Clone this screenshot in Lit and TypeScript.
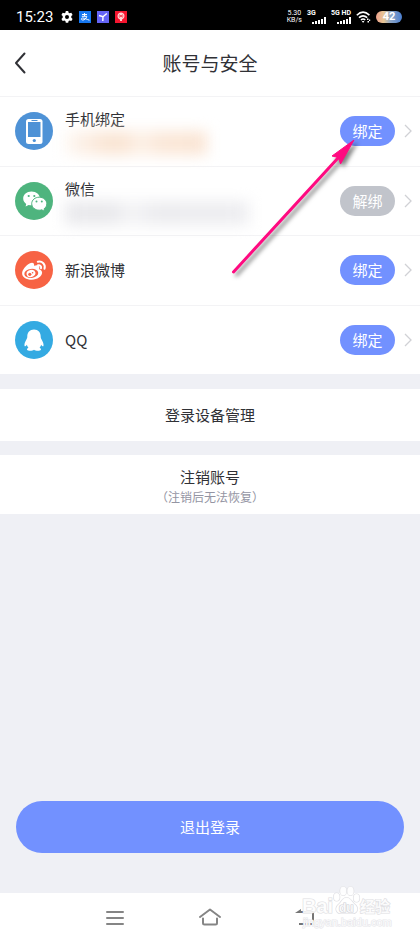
import { LitElement, html, css, svg, nothing } from "lit";
import { customElement, property } from "lit/decorators.js";
import { classMap } from "lit/directives/class-map.js";

const fontStack = css`"Noto Sans CJK SC", "Noto Sans", sans-serif`;

const bars = html`<svg class="bars" viewBox="0 0 14 7" aria-hidden="true">
  <path fill="#fff" d="M0 5h2v2H0zM3 4h2v3H3zM6 3h2v4H6zM9 2h2v5H9zM12 0h2v7h-2z" />
</svg>`;

@customElement("status-bar")
export class StatusBar extends LitElement {
  static styles = css`
    :host {
      display: flex;
      align-items: center;
      height: 30px;
      padding: 4px 18px 0 16px;
      box-sizing: border-box;
      background: #000;
      color: #fff;
      font-family: Roboto, sans-serif;
    }
    .time { font-size: 15px; line-height: 18px; margin-right: 8px; }
    .apps { display: flex; gap: 6px; }
    .apps svg { width: 12px; height: 12px; display: block; }
    .signals { display: flex; align-items: center; gap: 5px; margin-left: auto; }
    .speed { font-size: 7px; line-height: 7px; text-align: center; }
    .net { display: flex; flex-direction: column; align-items: flex-end; font-size: 7px; line-height: 7px; font-weight: 700; }
    .net span { align-self: flex-start; }
    .bars { width: 14px; height: 7px; display: block; }
    .net .bars { margin-left: 5px; }
    .wifi { width: 15px; height: 12px; display: block; }
    .battery {
      width: 26px;
      height: 12px;
      border-radius: 6px;
      background: linear-gradient(90deg, #eda08c, #e6c795 30%, #8fa6c4 55%, #4b7fd0);
      font-size: 11px;
      line-height: 12px;
      font-weight: 700;
      text-align: center;
    }
  `;
  render() {
    return html`
      <span class="time">15:23</span>
      <span class="apps">
        <svg viewBox="0 0 12 12">
          <path fill="#fff" fill-rule="evenodd" d="M4.8 0h2.4l.4 1.7 1 .6 1.7-.6 1.3 2.2-1.3 1.2v1.6l1.3 1.2-1.3 2.2-1.7-.6-1 .6-.4 1.7H4.8l-.4-1.7-1-.6-1.7.6L.4 7.9l1.3-1.2V5.1L.4 3.9l1.3-2.2 1.7.6 1-.6zM6 4a2 2 0 1 0 0 4 2 2 0 0 0 0-4z" />
        </svg>
        <svg viewBox="0 0 12 12">
          <path fill="#1677f0" d="M0 0h12v12H0z" />
          <path fill="none" stroke="#fff" d="M3 3.5h5M5.5 2v3M2.8 5.3h5C7 8 5.5 9 3.8 9 1.5 9 2 6.8 4 7c2 .2 4 1.6 6.5 2.200" />
        </svg>
        <svg viewBox="0 0 12 12">
          <path fill="#6464f5" d="M0 0h12v12H0z" />
          <path fill="none" stroke="#fff" stroke-width="1.400" d="M2 4.500l4 1.200L9.800 2.500M6 5.700 5.800 10" />
        </svg>
        <svg viewBox="0 0 12 12">
          <path fill="#f5152f" d="M0 0h12v12H0z" />
          <path fill="#ffd5d5" d="M6 1.500c2 0 3.500 1.500 3.500 3.500S8 8 7 8.500V10H5V8.500C3.500 8 2.500 7 2.500 5S4 1.500 6 1.500z" />
          <path fill="none" stroke="#f5152f" stroke-width=".6" d="M3.500 5h5M4 3.500l4 3M8 3.500l-4 3" />
        </svg>
      </span>
      <span class="signals">
        <span class="speed">5.30<br />KB/s</span>
        <span class="net"><span>3G</span>${bars}</span>
        <span class="net"><span>5G HD</span>${bars}</span>
        <svg class="wifi" viewBox="0 0 15 12">
          <g fill="none" stroke="#fff" stroke-width="1.600">
            <path d="M.8 4.200Q7 -1.800 13.400 4.200M3 6.700q4-3.800 8.200 0M5 9q2.100-2 4.200 0" />
          </g>
          <path fill="#fff" d="M5.800 10h2.600L7.100 12zM11 7.500h1.500V9H11zM13 8.500h1.200V10H13zM11.500 10H13v1.500h-1.500z" />
        </svg>
        <span class="battery">42</span>
      </span>
    `;
  }
}

const logos: Record<string, unknown> = {
  phone: svg`
    <circle cx="19" cy="19" r="19" fill="#4e92d6"/>
    <rect x="11" y="7" width="16.500" height="25" rx="2.500" fill="#fff"/>
    <rect x="13" y="10" width="12.500" height="15" fill="#4e92d6"/>
    <path d="M16.500 8.500h6" stroke="#4e92d6" stroke-width="1"/>
    <circle cx="19.300" cy="28.500" r="1.600" fill="#4e92d6"/>`,
  wechat: svg`
    <circle cx="19" cy="19" r="19" fill="#4eb47e"/>
    <path fill="#fff" d="M16.500 9.500c-4.800 0-8.300 3.100-8.300 7 0 2.300 1.200 4.200 3 5.400l-.6 2.500 3-1.500c1 .3 2 .4 3.300.4 4.600 0 8-3 8-6.800 0-3.900-3.600-7-8.400-7z"/>
    <path fill="#fff" stroke="#4eb47e" stroke-width="1" d="M24.200 15.200c-4.200 0-7.500 2.900-7.500 6.500s3.300 6.500 7.500 6.500c.9 0 1.700-.1 2.500-.4l2.900 1.500-.5-2.500c1.700-1.200 2.700-3 2.700-5.100 0-3.600-3.400-6.500-7.600-6.500z"/>
    <g fill="#4eb47e"><circle cx="13.700" cy="14" r="1.100"/><circle cx="19.300" cy="14" r="1.100"/><circle cx="21.500" cy="19.500" r="1"/><circle cx="26.800" cy="19.500" r="1"/></g>`,
  weibo: svg`
    <circle cx="19" cy="19" r="19" fill="#f76344"/>
    <path fill="#fff" d="M14.500 12.500c2.800-1.800 5.200-.7 4.500 2.200 2.600-1 5.800-.9 5.400 2.100l-.3 1.400c1.700.5 3 1.500 3 3.400 0 3.800-4.900 7.200-10.300 7.200-5.500 0-9.700-2.600-9.700-6.500 0-3.500 4-8 7.400-9.800z"/>
    <ellipse cx="16.300" cy="22.400" rx="7" ry="4.500" fill="#f76344" transform="rotate(-6 16.300 22.400)"/>
    <ellipse cx="16" cy="22.500" rx="4.500" ry="3.500" fill="#fff" transform="rotate(-15 16 22.500)"/>
    <circle cx="14.800" cy="23.300" r="1.600" fill="#f76344"/><circle cx="17.600" cy="21.700" r=".8" fill="#f76344"/>
    <path fill="none" stroke="#fff" stroke-width="2" stroke-linecap="round" d="M22.800 10.700c4.500-1 8 2.700 6.700 7M23 14.200c2-.4 3.600 1.200 3 3"/>`,
  qq: svg`
    <circle cx="19" cy="19" r="19" fill="#34aae2"/>
    <path fill="#fff" d="M19 8.500c-4.300 0-6.700 3-6.700 7 0 1.300-.3 2-.9 3-1.300 2.200-2.200 4.300-1.900 6.300.2 1 1.300.5 2.300-1.100.3 1.200.8 2.100 1.600 3-1.200.5-1.700 1.200-1.300 2 .7 1.300 5.300 1.300 6.900 0 1.600 1.300 6.200 1.300 6.900 0 .4-.8-.1-1.500-1.300-2 .8-.9 1.300-1.800 1.600-3 1 1.600 2.100 2.100 2.300 1.100.3-2-.6-4.100-1.900-6.300-.6-1-.9-1.700-.9-3 0-4-2.400-7-6.700-7z"/>`,
};

@customElement("account-row")
export class AccountRow extends LitElement {
  @property() logo = "";
  @property() name = "";
  @property() action = "";
  @property() mask = "";
  @property({ type: Boolean }) muted = false;

  static styles = css`
    :host {
      display: flex;
      align-items: center;
      padding: 0 8px 0 15px;
      border-top: 1px solid #f3f3f5;
      font-family: ${fontStack};
      color: #303136;
    }
    .logo { width: 38px; height: 38px; flex: none; margin-right: 12px; }
    .body { flex: 1; min-width: 0; }
    .name { font-size: 15px; line-height: 24px; }
    .mask { height: 24px; filter: blur(7px); }
    .mask.warm {
      width: 142px;
      background: linear-gradient(90deg, #fef8f3, #fae5d4 30%, #fae5d4 40%, #fdf1e7 54%, #fbe8d9 66%, #fae5d4);
    }
    .mask.cool {
      width: 184px;
      background: linear-gradient(90deg, #eaeaed, #e9e9ec 25%, #f4f4f6 36%, #ececef 50%, #eeeef1);
    }
    .act {
      flex: none;
      width: 55px;
      height: 30px;
      padding: 0;
      border: 0;
      border-radius: 15px;
      background: #7291ff;
      color: #fff;
      font: 15px/30px ${fontStack};
      cursor: pointer;
    }
    .act.muted { background: #c1c4cb; }
    .go { width: 8px; height: 14px; flex: none; margin-left: 9px; }
  `;
  render() {
    return html`
      <svg class="logo" viewBox="0 0 38 38" aria-hidden="true">${logos[this.logo]}</svg>
      <div class="body">
        <div class="name">${this.name}</div>
        ${this.mask ? html`<div class="mask ${this.mask}"></div>` : nothing}
      </div>
      <button class=${classMap({ act: true, muted: this.muted })} aria-label=${this.action + this.name}>${this.action}</button>
      <svg class="go" viewBox="0 0 8 14" aria-hidden="true">
        <path d="M1 1l6 6-6 6" fill="none" stroke="#d0d1d5" stroke-width="1.300" />
      </svg>
    `;
  }
}

@customElement("app-root")
export class AppRoot extends LitElement {
  static styles = css`
    :host {
      position: relative;
      display: flex;
      flex-direction: column;
      min-height: 100vh;
      background: #eff0f5;
      color: #303136;
      font-family: ${fontStack};
    }
    button { font-family: inherit; color: inherit; cursor: pointer; border: 0; padding: 0; }
    header {
      display: grid;
      grid-template-columns: 44px 1fr 44px;
      align-items: center;
      height: 66px;
      background: #fff;
    }
    .back { height: 44px; background: none; padding-left: 14px; text-align: left; }
    .back svg { width: 12px; height: 22px; display: block; }
    h1 { margin: 0; font-size: 19px; line-height: 28px; font-weight: 400; text-align: center; }
    .accounts { display: grid; grid-auto-rows: 1fr; min-height: 278px; background: #fff; }
    .card { width: 100%; background: #fff; font-size: 15px; line-height: 24px; }
    .devices { margin-top: 15px; min-height: 52px; }
    .cancel { margin-top: 14px; min-height: 59px; }
    .cancel span { display: block; }
    .cancel .note { font-size: 12px; line-height: 16px; color: #9495a3; }
    .logout {
      margin: auto 16px 40px;
      min-height: 52px;
      border-radius: 26px;
      background: #7291ff;
      color: #fff;
      font-size: 15px;
      line-height: 24px;
    }
    nav { display: flex; justify-content: center; height: 47px; background: #fff; }
    .keys { display: grid; grid-template-columns: repeat(3, 1fr); width: 68%; }
    .keys button { display: grid; place-items: center; background: none; }
    .keys svg { width: 22px; height: 18px; }
    .pointer { position: absolute; right: 56px; top: 130px; width: 140px; height: 150px; pointer-events: none; filter: drop-shadow(3px 3px 2px rgba(0, 0, 0, 0.5)); }
    .mark { position: absolute; right: 24px; bottom: 8px; width: 96px; height: 48px; pointer-events: none; font-family: "Liberation Sans", "Noto Sans CJK SC", sans-serif; }
  `;
  render() {
    return html`
      <status-bar></status-bar>
      <header>
        <button class="back" aria-label="返回">
          <svg viewBox="0 0 12 22"><path d="M10.500 1.500 2 11l8.500 9.500" fill="none" stroke="#303136" stroke-width="2" stroke-linecap="round" stroke-linejoin="round" /></svg>
        </button>
        <h1>账号与安全</h1>
      </header>
      <section class="accounts">
        <account-row logo="phone" name="手机绑定" action="绑定" mask="warm"></account-row>
        <account-row logo="wechat" name="微信" action="解绑" mask="cool" muted></account-row>
        <account-row logo="weibo" name="新浪微博" action="绑定"></account-row>
        <account-row logo="qq" name="QQ" action="绑定"></account-row>
      </section>
      <button class="card devices">登录设备管理</button>
      <button class="card cancel"><span>注销账号</span><span class="note">（注销后无法恢复）</span></button>
      <button class="logout">退出登录</button>
      <nav>
        <div class="keys">
          <button aria-label="菜单">
            <svg viewBox="0 0 22 18"><path d="M3 4h16M3 10h16M3 16h16" stroke="#858585" stroke-width="2" stroke-linecap="round" /></svg>
          </button>
          <button aria-label="主页">
            <svg viewBox="0 0 22 18"><path d="M1 9 11 1.500 21 9M4 10.500V15q0 1.500 1.500 1.500h11q1.500 0 1.500-1.500v-4.500" fill="none" stroke="#858585" stroke-width="2" stroke-linecap="round" stroke-linejoin="round" /></svg>
          </button>
          <button aria-label="后退">
            <svg viewBox="0 0 22 18"><path d="M5 16h14V4H7" fill="none" stroke="#757575" stroke-width="2" /><path d="M1 5 7 1v4z" fill="#757575" /></svg>
          </button>
        </div>
      </nav>
      <svg class="pointer" viewBox="0 0 140 150" aria-hidden="true">
        <path d="M9.500 142 114 28" stroke="#ff0a80" stroke-width="3" stroke-linecap="round" />
        <path d="M130 10 108 26l6.500 1.500L116.500 34z" fill="#ff0a80" stroke="#ff0a80" stroke-width="1" />
      </svg>
      <svg class="mark" viewBox="0 0 96 48">
        <g fill="#fff" fill-opacity=".85" stroke="#dedee2" stroke-width="1.200" paint-order="stroke">
          <text x="2" y="29" font-size="20" font-weight="700">Bai</text>
          <ellipse cx="36.700" cy="13" rx="3" ry="4" /><ellipse cx="43.300" cy="7" rx="3.200" ry="4.500" />
          <ellipse cx="50.500" cy="7" rx="3.200" ry="4.500" /><ellipse cx="56.500" cy="14" rx="3" ry="4" />
          <path d="M46.500 13.500c4 0 5 4 8 6.500 5 4 3 9.500-2 9.500H41c-5 0-7-5.500-2-9.500 3-2.500 3.500-6.500 7.500-6.500z" />
          <text x="39" y="28" font-size="12" font-weight="700" stroke="#d0d0d6">du</text>
          <text x="60" y="28" font-size="15" font-weight="700">经验</text>
          <text x="3" y="42" font-size="11" stroke="#e6e6ea">jingyan.baidu.com</text>
        </g>
      </svg>
    `;
  }
}
